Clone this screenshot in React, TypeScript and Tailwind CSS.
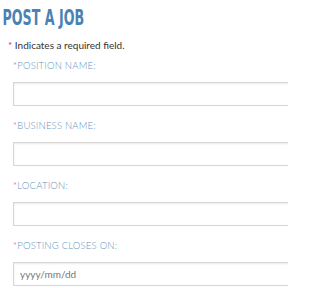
export default function App() {
  const fields = [
    { label: "POSITION NAME:" },
    { label: "BUSINESS NAME:" },
    { label: "LOCATION:" },
    { label: "POSTING CLOSES ON:", placeholder: "yyyy/mm/dd" },
  ];

  return (
    <div className="w-[288px] h-[288px] overflow-hidden bg-white font-['Lato',sans-serif]">
      <h1 className="pl-[4px] pt-[7px] text-[22px] leading-[22px] font-bold text-[#4a82b4] origin-left scale-x-[0.64] whitespace-nowrap font-['DejaVu_Sans_Condensed',sans-serif]">
        POST A JOB
      </h1>
      <p className="pl-[8px] mt-[9px] text-[10px] leading-[14px] text-[#333]">
        <span className="text-[#d9363e]">*</span> Indicates a required field.
      </p>
      <div className="flex flex-col pl-[13px] mt-[7px]">
        {fields.map((f) => (
          <div key={f.label} className="flex flex-col">
            <label className="text-[9.5px] leading-[14px] tracking-[0.2px] text-[#6494bb] font-light">
              <span className="text-[#d9363e]">*</span>{f.label}
            </label>
            <input
              placeholder={f.placeholder}
              className="mt-[9px] mb-[13px] w-[290px] h-[24px] border border-[#d6d6d6] shadow-[inset_0_1px_2px_rgba(0,0,0,0.08)] px-[6px] text-[10px] placeholder:text-[#777] outline-none"
            />
          </div>
        ))}
      </div>
    </div>
  );
}
